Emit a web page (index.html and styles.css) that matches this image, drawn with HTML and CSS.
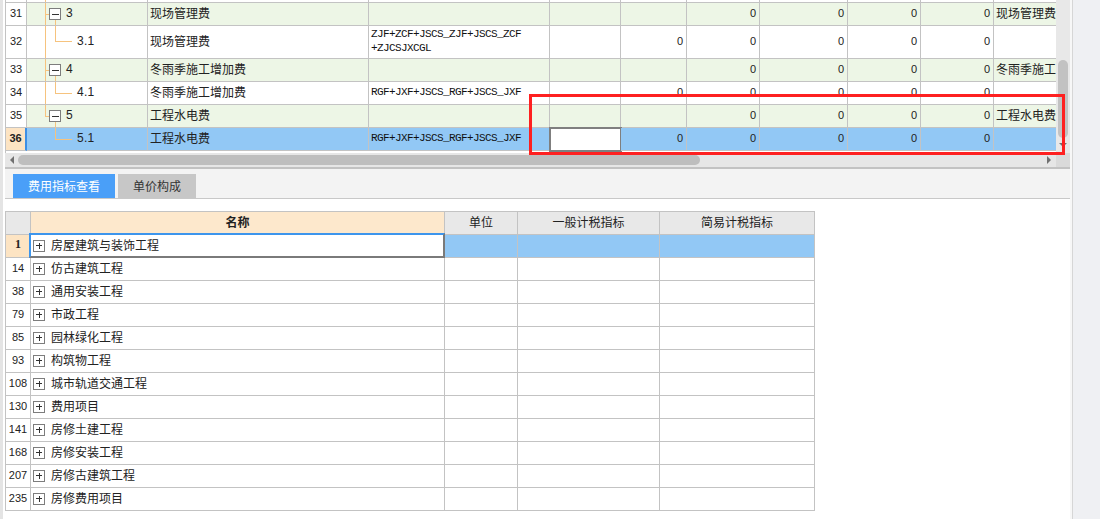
FILE: index.html
```html
<!DOCTYPE html>
<html lang="zh">
<head>
<meta charset="utf-8">
<link rel="stylesheet" href="styles.css">
</head>
<body>
<div class="app">
  <div class="main">
    <div class="top-row">
      <div class="grid">
        <div class="grid-inner">
          <div class="trow">
            <div class="c w0 num"></div>
            <div class="c w1 tree"><svg width="39" height="22"><path class="tl" d="M18.5 0V22"/></svg></div>
            <div class="c w2"></div><div class="c w3"></div><div class="c w4"></div><div class="c w5"></div><div class="c w6"></div><div class="c w7"></div><div class="c w8"></div><div class="c w9"></div><div class="c w10"></div>
          </div>
          <div class="trow green">
            <div class="c w0 num">31</div>
            <div class="c w1 tree"><svg width="39" height="22"><path class="tl" d="M18.5 0V22M18.5 11.5H22M28.5 17V22"/><rect class="bx" x="22.5" y="5.5" width="11" height="11"/><path class="mk" d="M25 11.5H32"/></svg><span class="lab">3</span></div>
            <div class="c w2">现场管理费</div><div class="c w3 f"></div><div class="c w4"></div><div class="c w5 n"></div><div class="c w6 n">0</div><div class="c w7 n">0</div><div class="c w8 n">0</div><div class="c w9 n">0</div><div class="c w10">现场管理费</div>
          </div>
          <div class="trow tall">
            <div class="c w0 num">32</div>
            <div class="c w1 tree"><svg width="50" height="32"><path class="tl" d="M18.5 0V32M28.5 0V15.5H45"/></svg><span class="lab">3.1</span></div>
            <div class="c w2">现场管理费</div><div class="c w3 f wrap">ZJF+ZCF+JSCS_ZJF+JSCS_ZCF<br>+ZJCSJXCGL</div><div class="c w4"></div><div class="c w5 n">0</div><div class="c w6 n">0</div><div class="c w7 n">0</div><div class="c w8 n">0</div><div class="c w9 n">0</div><div class="c w10"></div>
          </div>
          <div class="trow green">
            <div class="c w0 num">33</div>
            <div class="c w1 tree"><svg width="39" height="22"><path class="tl" d="M18.5 0V22M18.5 11.5H22M28.5 17V22"/><rect class="bx" x="22.5" y="5.5" width="11" height="11"/><path class="mk" d="M25 11.5H32"/></svg><span class="lab">4</span></div>
            <div class="c w2">冬雨季施工增加费</div><div class="c w3 f"></div><div class="c w4"></div><div class="c w5 n"></div><div class="c w6 n">0</div><div class="c w7 n">0</div><div class="c w8 n">0</div><div class="c w9 n">0</div><div class="c w10">冬雨季施工增加费</div>
          </div>
          <div class="trow">
            <div class="c w0 num">34</div>
            <div class="c w1 tree"><svg width="50" height="22"><path class="tl" d="M18.5 0V22M28.5 0V11.5H45"/></svg><span class="lab">4.1</span></div>
            <div class="c w2">冬雨季施工增加费</div><div class="c w3 f">RGF+JXF+JSCS_RGF+JSCS_JXF</div><div class="c w4"></div><div class="c w5 n">0</div><div class="c w6 n">0</div><div class="c w7 n">0</div><div class="c w8 n">0</div><div class="c w9 n">0</div><div class="c w10"></div>
          </div>
          <div class="trow green">
            <div class="c w0 num">35</div>
            <div class="c w1 tree"><svg width="39" height="22"><path class="tl" d="M18.5 0V11.5H22M28.5 17V22"/><rect class="bx" x="22.5" y="5.5" width="11" height="11"/><path class="mk" d="M25 11.5H32"/></svg><span class="lab">5</span></div>
            <div class="c w2">工程水电费</div><div class="c w3 f"></div><div class="c w4"></div><div class="c w5 n"></div><div class="c w6 n">0</div><div class="c w7 n">0</div><div class="c w8 n">0</div><div class="c w9 n">0</div><div class="c w10">工程水电费</div>
          </div>
          <div class="trow sel">
            <div class="c w0 num">36</div>
            <div class="c w1 tree"><svg width="50" height="22"><path class="tl" d="M28.5 0V11.5H45"/></svg><span class="lab">5.1</span></div>
            <div class="c w2">工程水电费</div><div class="c w3 f">RGF+JXF+JSCS_RGF+JSCS_JXF</div><div class="c w4 edit"></div><div class="c w5 n">0</div><div class="c w6 n">0</div><div class="c w7 n">0</div><div class="c w8 n">0</div><div class="c w9 n">0</div><div class="c w10"></div>
          </div>
        </div>
      </div>
      <div class="vscroll"><div class="vthumb"></div><div class="varrow"></div></div>
    </div>
    <div class="hbar">
      <div class="htrack"><span class="arr-l"></span><div class="hthumb"></div><span class="arr-r"></span></div>
      <div class="corner"></div>
    </div>
    <div class="tabs">
      <div class="tab active">费用指标查看</div>
      <div class="tab t2">单价构成</div>
    </div>
    <div class="lower">
      <div class="ltable">
        <div class="lrow head">
          <div class="l l0"></div>
          <div class="l l1 hname">名称</div>
          <div class="l l2 hc">单位</div>
          <div class="l l3 hc">一般计税指标</div>
          <div class="l l4 hc">简易计税指标</div>
        </div>
        <div class="lrow cur">
          <div class="l l0 rn">1</div>
          <div class="l l1 nm focus"><svg class="pl" width="12" height="12"><rect x="0.5" y="0.5" width="11" height="11"/><path d="M3 5.5H9M6 2.5V8.5"/></svg>房屋建筑与装饰工程</div>
          <div class="l l2"></div><div class="l l3"></div><div class="l l4"></div>
        </div>
        <div class="lrow"><div class="l l0 rn">14</div><div class="l l1 nm"><svg class="pl" width="12" height="12"><rect x="0.5" y="0.5" width="11" height="11"/><path d="M3 5.5H9M6 2.5V8.5"/></svg>仿古建筑工程</div><div class="l l2"></div><div class="l l3"></div><div class="l l4"></div></div>
        <div class="lrow"><div class="l l0 rn">38</div><div class="l l1 nm"><svg class="pl" width="12" height="12"><rect x="0.5" y="0.5" width="11" height="11"/><path d="M3 5.5H9M6 2.5V8.5"/></svg>通用安装工程</div><div class="l l2"></div><div class="l l3"></div><div class="l l4"></div></div>
        <div class="lrow"><div class="l l0 rn">79</div><div class="l l1 nm"><svg class="pl" width="12" height="12"><rect x="0.5" y="0.5" width="11" height="11"/><path d="M3 5.5H9M6 2.5V8.5"/></svg>市政工程</div><div class="l l2"></div><div class="l l3"></div><div class="l l4"></div></div>
        <div class="lrow"><div class="l l0 rn">85</div><div class="l l1 nm"><svg class="pl" width="12" height="12"><rect x="0.5" y="0.5" width="11" height="11"/><path d="M3 5.5H9M6 2.5V8.5"/></svg>园林绿化工程</div><div class="l l2"></div><div class="l l3"></div><div class="l l4"></div></div>
        <div class="lrow"><div class="l l0 rn">93</div><div class="l l1 nm"><svg class="pl" width="12" height="12"><rect x="0.5" y="0.5" width="11" height="11"/><path d="M3 5.5H9M6 2.5V8.5"/></svg>构筑物工程</div><div class="l l2"></div><div class="l l3"></div><div class="l l4"></div></div>
        <div class="lrow"><div class="l l0 rn">108</div><div class="l l1 nm"><svg class="pl" width="12" height="12"><rect x="0.5" y="0.5" width="11" height="11"/><path d="M3 5.5H9M6 2.5V8.5"/></svg>城市轨道交通工程</div><div class="l l2"></div><div class="l l3"></div><div class="l l4"></div></div>
        <div class="lrow"><div class="l l0 rn">130</div><div class="l l1 nm"><svg class="pl" width="12" height="12"><rect x="0.5" y="0.5" width="11" height="11"/><path d="M3 5.5H9M6 2.5V8.5"/></svg>费用项目</div><div class="l l2"></div><div class="l l3"></div><div class="l l4"></div></div>
        <div class="lrow"><div class="l l0 rn">141</div><div class="l l1 nm"><svg class="pl" width="12" height="12"><rect x="0.5" y="0.5" width="11" height="11"/><path d="M3 5.5H9M6 2.5V8.5"/></svg>房修土建工程</div><div class="l l2"></div><div class="l l3"></div><div class="l l4"></div></div>
        <div class="lrow"><div class="l l0 rn">168</div><div class="l l1 nm"><svg class="pl" width="12" height="12"><rect x="0.5" y="0.5" width="11" height="11"/><path d="M3 5.5H9M6 2.5V8.5"/></svg>房修安装工程</div><div class="l l2"></div><div class="l l3"></div><div class="l l4"></div></div>
        <div class="lrow"><div class="l l0 rn">207</div><div class="l l1 nm"><svg class="pl" width="12" height="12"><rect x="0.5" y="0.5" width="11" height="11"/><path d="M3 5.5H9M6 2.5V8.5"/></svg>房修古建筑工程</div><div class="l l2"></div><div class="l l3"></div><div class="l l4"></div></div>
        <div class="lrow"><div class="l l0 rn">235</div><div class="l l1 nm"><svg class="pl" width="12" height="12"><rect x="0.5" y="0.5" width="11" height="11"/><path d="M3 5.5H9M6 2.5V8.5"/></svg>房修费用项目</div><div class="l l2"></div><div class="l l3"></div><div class="l l4"></div></div>
      </div>
    </div>
    <div class="redbox"></div>
  </div>
  <div class="side"></div>
</div>
</body>
</html>
```

FILE: styles.css
```css
html, body {
  margin: 0;
  padding: 0;
}
body {
  width: 1100px;
  height: 519px;
  overflow: hidden;
  font-family: "Noto Sans CJK SC", "Liberation Sans", sans-serif;
  font-size: 12px;
  color: #222;
}
.app {
  display: flex;
  height: 519px;
  background: #f7f7f7;
}
.main {
  position: relative;
  width: 1070px;
  flex: none;
  box-sizing: border-box;
  border-left: 3px solid #e4e4e4;
  padding-left: 2px;
  background: #fff;
  display: flex;
  flex-direction: column;
}
.side {
  flex: 1;
  margin-left: 2px;
  border-left: 1px solid #d6d6d6;
  background: #eff0f3;
}

/* ---------- top grid ---------- */
.top-row {
  display: flex;
  height: 153px;
}
.grid {
  width: 1051px;
  flex: none;
  box-sizing: border-box;
  border-left: 1px solid #c3c3c3;
  overflow: hidden;
  background: #fff;
}
.grid-inner {
  margin-top: -20px;
}
.trow {
  display: flex;
  height: 23px;
}
.trow.tall {
  height: 33px;
}
.trow.green .c {
  background: #edf6e6;
}
.trow.green .c.w0 {
  background: #fff;
}
.trow.sel .c {
  background: #92c8f5;
}
.c {
  box-sizing: border-box;
  flex: none;
  height: 100%;
  border-right: 1px solid #c3c3c3;
  border-bottom: 1px solid #c3c3c3;
  display: flex;
  align-items: center;
  white-space: nowrap;
  overflow: hidden;
  padding: 0 2px 3px;
}
.w0 { width: 21px; }
.w1 { width: 121px; }
.w2 { width: 221px; }
.w3 { width: 181px; }
.w4 { width: 71px; }
.w5 { width: 66px; }
.w6 { width: 73px; }
.w7 { width: 88px; }
.w8 { width: 73px; }
.w9 { width: 73px; }
.w10 { width: 110px; border-right: none; }

.num {
  justify-content: center;
  padding-left: 0;
  padding-right: 0;
  font-family: "Liberation Sans", sans-serif;
  font-size: 11px;
}
.trow.sel .c.num {
  background: #fde4c3;
  font-weight: bold;
  border-right: 2px solid #3d8fe4;
}
.n {
  justify-content: flex-end;
  padding-right: 3px;
  font-family: "Liberation Sans", sans-serif;
  font-size: 11px;
}
.f {
  font-family: "Liberation Mono", monospace;
  font-size: 11px;
  letter-spacing: -0.6px;
  color: #111;
}
.f.wrap {
  white-space: normal;
  line-height: 14px;
}
.tree {
  padding-left: 0;
  padding-right: 0;
}
.tree svg {
  flex: none;
  display: block;
  margin-bottom: -3px;
  shape-rendering: crispEdges;
}
.tl {
  stroke: #f6c37e;
  stroke-width: 1;
  fill: none;
}
.bx {
  fill: #fff;
  stroke: #7d7d7d;
  stroke-width: 1;
}
.mk {
  stroke: #333;
  stroke-width: 1;
}
.lab {
  font-family: "Liberation Sans", sans-serif;
  font-size: 12px;
  letter-spacing: 0.3px;
  color: #222;
  white-space: pre;
}
.trow.sel .c.edit {
  background: #fff;
  outline: 2px solid #7f7f7f;
  outline-offset: -1px;
}

/* ---------- scrollbars ---------- */
.vscroll {
  width: 14px;
  flex: none;
  background: #e8e8e8;
  display: flex;
  flex-direction: column;
  align-items: center;
}
.vthumb {
  margin-top: 60px;
  width: 10px;
  height: 78px;
  border-radius: 5px;
  background: #c2c2c2;
}
.varrow {
  margin-top: 5px;
  width: 0;
  height: 0;
  border-left: 4px solid transparent;
  border-right: 4px solid transparent;
  border-top: 4px solid #707070;
}
.hbar {
  display: flex;
  height: 14px;
  flex: none;
  border-bottom: 2px solid #c2c2c2;
}
.htrack {
  width: 1051px;
  box-sizing: border-box;
  background: #e6e6e6;
  display: flex;
  align-items: center;
  padding: 0 5px;
}
.arr-l {
  width: 0;
  height: 0;
  border-top: 4px solid transparent;
  border-bottom: 4px solid transparent;
  border-right: 4px solid #707070;
}
.hthumb {
  margin-left: 4px;
  width: 682px;
  height: 10px;
  border-radius: 5px;
  background: #bebebe;
}
.arr-r {
  margin-left: auto;
  width: 0;
  height: 0;
  border-top: 4px solid transparent;
  border-bottom: 4px solid transparent;
  border-left: 4px solid #707070;
}
.corner {
  width: 14px;
  background: #dadada;
}

/* ---------- tabs ---------- */
.tabs {
  height: 29px;
  flex: none;
  background: #f3f3f3;
  border-bottom: 1px solid #c8c8c8;
  display: flex;
  align-items: flex-end;
  padding-left: 8px;
  gap: 3px;
}
.tab {
  height: 24px;
  box-sizing: border-box;
  padding-bottom: 2px;
  width: 78px;
  display: flex;
  align-items: center;
  justify-content: center;
  background: #c7c7c7;
  color: #333;
  font-size: 12px;
}
.tab.active {
  width: 102px;
  background: #4a9ff8;
  color: #fff;
}

/* ---------- lower table ---------- */
.lower {
  flex: 1;
  padding-top: 12px;
  background: #fff;
}
.ltable {
  width: 810px;
  box-sizing: border-box;
  border-left: 1px solid #c3c3c3;
  border-top: 1px solid #c3c3c3;
}
.lrow {
  display: flex;
  height: 23px;
}
.l {
  box-sizing: border-box;
  flex: none;
  height: 100%;
  border-right: 1px solid #c3c3c3;
  border-bottom: 1px solid #c3c3c3;
  display: flex;
  align-items: center;
  white-space: nowrap;
  padding-bottom: 3px;
}
.l0 { width: 25px; justify-content: center; }
.l1 { width: 414px; }
.l2 { width: 73px; }
.l3 { width: 142px; }
.l4 { width: 155px; }
.head .l {
  background: #e8e8e8;
  justify-content: center;
  color: #222;
}
.head .hname {
  background: #fde8cc;
  font-weight: bold;
}
.rn {
  font-family: "Liberation Sans", sans-serif;
  font-size: 11px;
}
.cur .rn {
  background: #fde4c3;
  font-family: "Liberation Serif", serif;
  font-weight: bold;
  font-size: 12px;
}
.cur .l2, .cur .l3, .cur .l4 {
  background: #92c8f5;
}
.nm {
  padding-left: 2px;
}
.pl {
  flex: none;
  margin-right: 6px;
  margin-bottom: -3px;
  shape-rendering: crispEdges;
}
.pl rect {
  fill: #fff;
  stroke: #7d7d7d;
}
.pl path {
  stroke: #333;
}
.focus {
  position: relative;
}
.focus::after {
  content: "";
  position: absolute;
  left: -2px;
  top: -2px;
  right: -1px;
  bottom: -1px;
  border-style: solid;
  border-width: 2px;
  border-color: #3d95ec #7a7a7a #7a7a7a #3d95ec;
}

/* ---------- annotation ---------- */
.redbox {
  position: absolute;
  left: 526px;
  top: 94px;
  width: 536px;
  height: 61px;
  box-sizing: border-box;
  border: 3px solid #fe2020;
}
```
